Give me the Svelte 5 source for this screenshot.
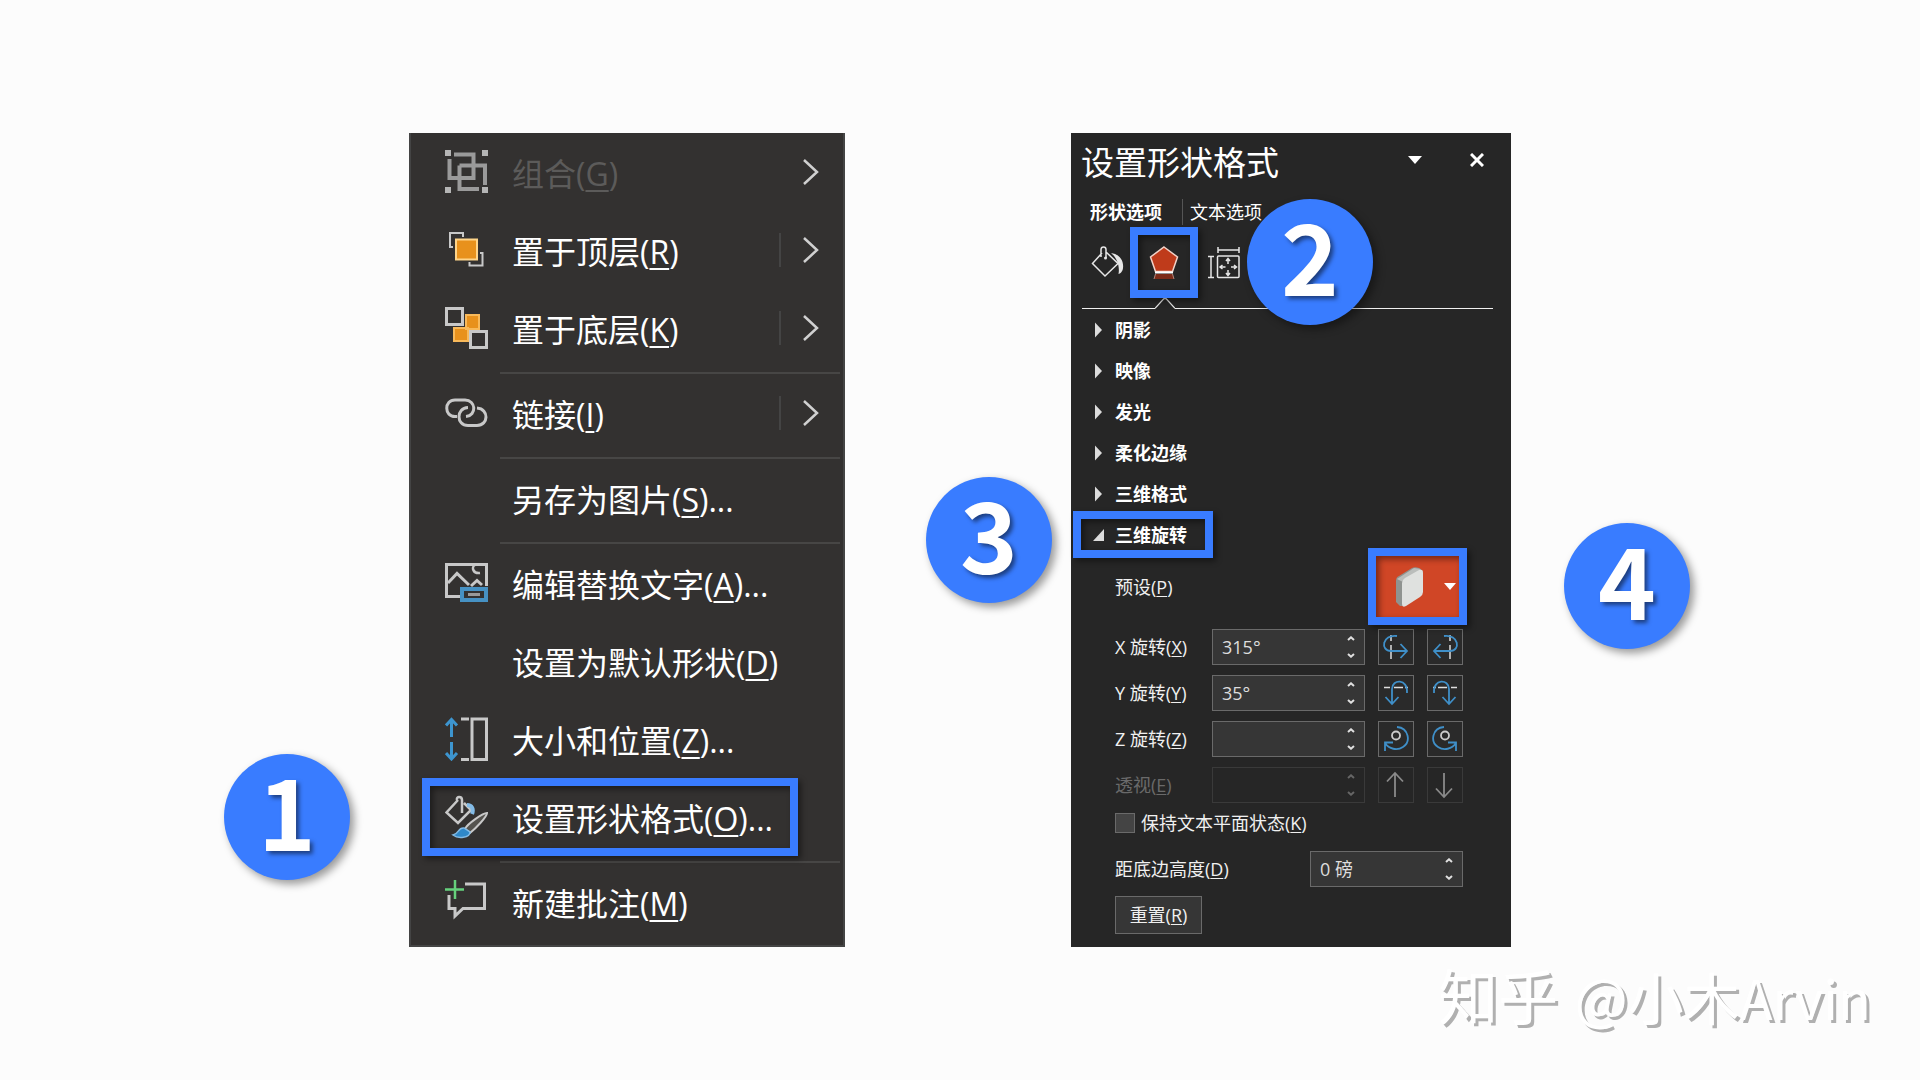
<script>
  const menu = [
    { icon: 'group', text: '组合', key: 'G', more: true, disabled: true },
    { icon: 'front', text: '置于顶层', key: 'R', more: true, split: true },
    { icon: 'back', text: '置于底层', key: 'K', more: true, split: true, line: true },
    { icon: 'link', text: '链接', key: 'I', more: true, split: true, line: true },
    { text: '另存为图片', key: 'S', dots: true, line: true },
    { icon: 'alt', text: '编辑替换文字', key: 'A', dots: true },
    { text: '设置为默认形状', key: 'D' },
    { icon: 'size', text: '大小和位置', key: 'Z', dots: true },
    { icon: 'format', text: '设置形状格式', key: 'O', dots: true, line: true, step: 1 },
    { icon: 'comment', text: '新建批注', key: 'M' }
  ];
  const sections = ['阴影', '映像', '发光', '柔化边缘', '三维格式'];
  const fields = [
    { id: 'x', name: 'X 旋转', key: 'X', value: '315°', a: '向左', b: '向右' },
    { id: 'y', name: 'Y 旋转', key: 'Y', value: '35°', a: '向下', b: '向上' },
    { id: 'z', name: 'Z 旋转', key: 'Z', value: '', a: '顺时针', b: '逆时针' },
    { id: 'p', name: '透视', key: 'E', value: '', a: '变窄', b: '变宽', disabled: true }
  ];
</script>

{#snippet spinner(id, value, disabled)}
  <div class="spinner" class:off={disabled}>
    <input {id} type="text" {value} {disabled} />
    <div class="steps">
      <button aria-label="增加" {disabled}><svg width="8" height="5" viewBox="0 0 8 5"><path d="M1 4L4 1.3L7 4" /></svg></button>
      <button aria-label="减少" {disabled}><svg width="8" height="5" viewBox="0 0 8 5"><path d="M1 1L4 3.7L7 1" /></svg></button>
    </div>
  </div>
{/snippet}

<div class="page">
  <main>
    <nav class="menu" aria-label="形状菜单">
      {#each menu as item}
        <div class="entry">
          <button class="item" disabled={item.disabled}>
            <span class="icon">
              {#if item.icon}
                <svg width="44" height="44" viewBox="0 0 44 44" fill="none" stroke="#c8c8c8" stroke-width="3">
                  {#if item.icon === 'group'}
                    <g stroke="#9a9a9a" stroke-width="4">
                      <path d="M9 4.5H28.5V28H4.5V9M14.5 15.5H40V35M34 39H14.5V15.5" />
                      <path d="M0 0h6v6H0zM37 0h6v6h-6zM0 37h6v6H0zM37 37h6v6h-6z" fill="#b5b5b5" stroke="none" />
                    </g>
                  {:else if item.icon === 'front'}
                    <path d="M8 19H5V5H18V9M35 25H37.5V37.5H24.5V34" stroke-width="2" />
                    <rect x="11" y="11.500" width="21" height="20" fill="#e8911c" stroke="#ffd58a" stroke-width="2" />
                  {:else if item.icon === 'back'}
                    <path d="M21 9h13v14H21zM9 22h14v13H9z" fill="#e8911c" stroke="#f8b95a" stroke-width="2" />
                    <path d="M1.500 2.500h16v16h-16zM25.500 25.500h16v16h-16z" fill="#333130" />
                  {:else if item.icon === 'link'}
                    <path d="M12 25.500H10C-1 25.500-1 9 10 9H20C31 9 32 24.500 21 25.500" />
                    <path d="M23 16.500C11 17 11 34.500 23 34.500H32C43.500 34.500 44.500 18 32 17" />
                  {:else if item.icon === 'alt'}
                    <path d="M15 35.500H1.500V3.500H41.500V25M3 22L12 12.500L24 24M26 25L32 19.500L37 24" />
                    <path d="M30 4C26 6 28 13 35 12" stroke-width="2.500" />
                    <path d="M17 28H41V39H17z" stroke="#4691c3" stroke-width="4" fill="#333130" />
                    <path d="M23 33.500H35" stroke="#999" />
                  {:else if item.icon === 'size'}
                    <path d="M6.500 20V3M1 8.500L6.500 2.500L12 8.500M6.500 25V41M1 36L6.500 42L12 36" stroke="#3d95cf" />
                    <path d="M27 2H41.500V42.500H27zM16 2H24M16 42.500H24" />
                  {:else if item.icon === 'format'}
                    <path d="M17 18V5C17 1 11 1 12 5M13 5L1.500 17.500L13 28L26 15L19 8" stroke-width="2.500" />
                    <path d="M22 10C27 10 29 14 27 19" stroke="#83bbe6" stroke-width="4" />
                    <path d="M42 18C38 18 22 29 20 34L25 38C30 34 42 22 42 18z" stroke-width="2" fill="#55534f" />
                    <path d="M19 33C13 32 14 39 8 40C13 44 25 43 25 37z" fill="#2f88c9" stroke="#83bbe6" stroke-width="1.500" />
                  {:else}
                    <path d="M20 4H39.500V28.500H18L10 36V28.500H4V15" />
                    <path d="M10 0V19M0 9.500H19" stroke="#66d17c" stroke-width="2.500" />
                  {/if}
                </svg>
              {/if}
            </span>
            <span class="text">{item.text}(<u>{item.key}</u>){item.dots ? '...' : ''}</span>
            {#if item.more}
              <span class="more" class:split={item.split}>
                <svg width="16" height="28" viewBox="0 0 16 28" fill="none" stroke="#d0d0d0" stroke-width="2.500"><path d="M1 2L14 14L1 26" /></svg>
              </span>
            {/if}
          </button>
          {#if item.step}
            <span class="ring"></span>
            <span class="badge one">1</span>
          {/if}
        </div>
        {#if item.line}<div class="rule"></div>{/if}
      {/each}
    </nav>

    <section class="panel">
      <header>
        <h1>设置形状格式</h1>
        <button aria-label="选项"><svg width="14" height="8" viewBox="0 0 14 8"><path d="M0 0H14L7 8z" fill="#fff" /></svg></button>
        <button aria-label="关闭"><svg width="14" height="14" viewBox="0 0 14 14" stroke="#fff" stroke-width="3"><path d="M1 1L13 13M13 1L1 13" /></svg></button>
      </header>
      <div class="tabs">
        <button class="active">形状选项</button>
        <button>文本选项</button>
      </div>
      <div class="kinds">
        <button aria-label="填充与线条">
          <svg width="34" height="34" viewBox="0 0 34 34" fill="none" stroke="#e6e6e6" stroke-width="1.500">
            <path d="M11 7L1.500 17.500L14 30L27 17.500L14.500 5.500M10 11V3.500C10 0 15 0 15 3.500V12" />
            <circle cx="14.500" cy="12" r="1.500" fill="#e6e6e6" stroke="none" />
            <path d="M20 7C28 8 33 14 32 22C32 25 29 28 27.500 28C29 20 26 12 20 7z" fill="#e6e6e6" stroke="none" />
          </svg>
        </button>
        <button class="effects" aria-label="效果">
          <svg width="30" height="36" viewBox="0 0 30 36">
            <path d="M15 2L28.500 12L23.500 26.500H6.500L1.500 12z" fill="#bf3b1b" stroke="#f3d3c9" stroke-width="1.500" />
            <path d="M6 27.500H24" stroke="#fff" stroke-width="2" />
            <path d="M6.500 29H23.500L25 34H5z" fill="#7d2b18" />
            <path d="M6.500 29L5 34M23.500 29L25 34" stroke="#b08a80" />
          </svg>
          <span class="ring"></span>
        </button>
        <button aria-label="大小与属性">
          <svg width="32" height="34" viewBox="0 0 32 34" fill="none" stroke="#e6e6e6" stroke-width="1.500">
            <path d="M10 1V7M31 1V7M10 4H31M0 10.500H6M0 31.500H6M3 10.500V31.500" />
            <rect x="9.500" y="10" width="21.500" height="21.500" rx="1" />
            <path d="M20 12.500V18M20 24V29.500M12 21H17.500M23 21H28.500M18 15L20 12.500L22 15M18 27L20 29.500L22 27M14.500 19L12 21L14.500 23M26 19L28.500 21L26 23" />
          </svg>
        </button>
        <span class="badge two">2</span>
      </div>
      <div class="edge"><i></i><svg width="20" height="11" viewBox="0 0 20 11" fill="none" stroke="#e6e6e6" stroke-width="1.300"><path d="M0 10.400L9 0.500H11L20 10.400" /></svg><i class="long"></i></div>

      <div class="sections">
        {#each sections as name}
          <button aria-expanded="false"><svg width="16" height="16" viewBox="0 0 16 16"><path d="M3 0.500L10 8L3 15.500z" fill="#dcdcdc" /></svg>{name}</button>
        {/each}
        <div class="open">
          <button aria-expanded="true"><svg width="16" height="16" viewBox="0 0 16 16"><path d="M12 2V14H1z" fill="#dcdcdc" /></svg>三维旋转</button>
          <span class="ring"></span>
          <span class="badge three">3</span>
        </div>
      </div>

      <div class="body">
        <div class="preset">
          <span>预设(<u>P</u>)</span>
          <button aria-label="预设">
            <svg width="30" height="42" viewBox="0 0 30 42">
              <path d="M1 15Q1 11 4 10L17 2Q20 0.500 24 2L28 5L8 40L5 40L1 36z" fill="#8f9390" />
              <path d="M2 13L19 2L26 3L8 16z" fill="#babdbb" />
              <path d="M7 17Q7 14 10 12L24 4Q28 2.500 28 7V26Q28 29 25 31L11 40Q7 42 7 38z" fill="#dfe1df" />
            </svg>
            <svg width="12" height="7" viewBox="0 0 12 7"><path d="M0 0H12L6 7z" fill="#fff" /></svg>
            <span class="ring"></span>
          </button>
          <span class="badge four">4</span>
        </div>

        {#each fields as f}
          <div class="field" class:off={f.disabled}>
            <label for={f.id}>{f.name}(<u>{f.key}</u>)</label>
            {@render spinner(f.id, f.value, f.disabled)}
            {#each [f.a, f.b] as side, i}
              <button class="turn" aria-label={side} disabled={f.disabled}>
                <svg width="28" height="28" viewBox="0 0 28 28" fill="none" stroke="#3f8fc8" stroke-width="1.800">
                  {#if f.id === 'x'}
                    <g transform={i ? 'translate(28 0) scale(-1 1)' : undefined}>
                      <path d="M9 2V8M9 12V26" stroke="#ddd" stroke-width="1.500" />
                      <path d="M15 3C0 1 -2 18 9 18H25M18.500 11L25 18L18.500 25" />
                    </g>
                  {:else if f.id === 'y'}
                    <g transform={i ? 'translate(28 0) scale(-1 1)' : undefined}>
                      <path d="M2 8.500H8M12 8.500H21M23 8.500H26" stroke="#ddd" stroke-width="1.500" />
                      <path d="M25 14C26 -1 10 0 10 10V25M3.500 18L10 25L16.500 18" />
                    </g>
                  {:else if f.id === 'z'}
                    <g transform={i ? 'translate(28 0) scale(-1 1)' : undefined}>
                      <path d="M15 2C27 3 29 17 21 22C15 26 7 24 3 18M3 26V17.500H11" />
                      <circle cx="14" cy="10.500" r="4" stroke="#ccc" />
                    </g>
                  {:else}
                    <g stroke="#8a8a8a" transform={i ? 'translate(0 28) scale(1 -1)' : undefined}>
                      <path d="M13 26V2M5 10.500L13 2L21 10.500" />
                    </g>
                  {/if}
                </svg>
              </button>
            {/each}
          </div>
        {/each}

        <div class="check">
          <input id="flat" type="checkbox" />
          <label for="flat">保持文本平面状态(<u>K</u>)</label>
        </div>
        <div class="field height">
          <label for="dist">距底边高度(<u>D</u>)</label>
          {@render spinner('dist', '0 磅', false)}
        </div>
        <button class="reset">重置(<u>R</u>)</button>
      </div>
    </section>
  </main>
  <footer><span class="site">知乎</span> @小木<span class="latin">Arvin</span></footer>
</div>

<style>
  :global(body) {
    margin: 0;
    background: #fcfcfc;
  }
  .page {
    min-height: 100vh;
    box-sizing: border-box;
    padding-top: 133px;
    font-family: 'Open Sans', 'Noto Sans CJK SC', sans-serif;
    color: #fff;
    overflow: hidden;
  }
  .page * {
    box-sizing: border-box;
  }
  main {
    display: grid;
    grid-template-columns: minmax(0, 409fr) minmax(0, 436fr) minmax(0, 226fr) minmax(0, 440fr) minmax(0, 409fr);
    align-items: start;
  }
  button {
    font: inherit;
    color: inherit;
    background: none;
    border: 0;
    padding: 0;
    margin: 0;
  }
  svg {
    display: block;
    flex: none;
  }
  u {
    text-decoration-thickness: 1px;
    text-underline-offset: 2px;
  }
  .ring {
    position: absolute;
    border: 8px solid #397cff;
    box-shadow: 3px 3px 6px rgba(0, 0, 0, 0.45), inset 3px 3px 6px rgba(0, 0, 0, 0.45);
    pointer-events: none;
  }
  .badge {
    position: absolute;
    z-index: 2;
    width: 126px;
    height: 126px;
    border-radius: 50%;
    background: #397cff;
    box-shadow: 4px 4px 8px rgba(0, 0, 0, 0.4);
    font: 700 98px/108px 'Noto Sans CJK SC', sans-serif;
    text-align: center;
    text-shadow: 3px 3px 4px rgba(0, 0, 0, 0.5);
    color: #fff;
  }

  .menu {
    grid-column: 2;
    background: #333130;
    border: solid #444;
    border-width: 0 2px 2px;
    padding-bottom: 4px;
  }
  .entry {
    position: relative;
  }
  .item {
    display: flex;
    align-items: center;
    width: 100%;
    height: 78px;
    padding: 0 24px 0 34px;
    text-align: left;
  }
  .item:disabled .text {
    color: #5c5b5a;
  }
  .icon {
    width: 67px;
  }
  .text {
    flex: 1;
    padding-top: 4px;
    font-size: 32px;
    line-height: 40px;
    white-space: nowrap;
  }
  .text u {
    text-decoration-thickness: 2px;
    text-underline-offset: 4px;
  }
  .more {
    display: flex;
    align-items: center;
    justify-content: flex-end;
    width: 40px;
    height: 34px;
  }
  .split {
    border-left: 2px solid #444;
  }
  .rule {
    height: 7px;
    margin: 0 3px 0 89px;
    border-bottom: 2px solid #474645;
  }
  .entry .ring {
    inset: 0 45px 0 11px;
  }
  .one {
    left: -187px;
    top: -24px;
  }

  .panel {
    grid-column: 4;
    background: #262626;
    padding-bottom: 13px;
    font-size: 18px;
    line-height: 24px;
  }
  header {
    display: flex;
    align-items: center;
    height: 60px;
    padding: 0 27px 0 10px;
  }
  h1 {
    flex: 1;
    margin: 0;
    font-weight: 400;
    font-size: 33px;
    line-height: 44px;
  }
  header button {
    padding-bottom: 6px;
  }
  header button + button {
    margin-left: 48px;
  }
  .tabs {
    display: flex;
    margin: 6px 0 2px 19px;
  }
  .tabs button {
    height: 26px;
  }
  .tabs .active {
    font-weight: 700;
    width: 93px;
    text-align: left;
    border-right: 1px solid #555;
    margin-right: 7px;
  }
  .kinds {
    position: relative;
    display: flex;
    align-items: center;
    height: 71px;
    padding-left: 20px;
  }
  .effects {
    position: relative;
    display: grid;
    place-items: center;
    width: 52px;
    height: 55px;
    margin: 0 18px 0 13px;
  }
  .effects .ring {
    inset: -8px;
  }
  .two {
    left: 176px;
    top: -28px;
  }
  .edge {
    display: flex;
    align-items: flex-end;
    margin: 0 18px 0 11px;
  }
  .edge i {
    width: 73px;
    border-bottom: 1px solid #f0f0f0;
  }
  .edge .long {
    flex: 1;
  }
  .sections {
    margin-bottom: 1px;
  }
  .sections button {
    display: flex;
    align-items: center;
    gap: 7px;
    width: 100%;
    height: 41px;
    padding-left: 21px;
    font-weight: 700;
  }
  .open {
    position: relative;
  }
  .open .ring {
    left: 2px;
    top: -3px;
    width: 140px;
    height: 47px;
  }
  .three {
    left: -145px;
    top: -37px;
  }
  .body {
    padding: 0 48px 0 44px;
    color: #f0f0f0;
  }
  .preset {
    position: relative;
    display: flex;
    align-items: center;
    justify-content: space-between;
    margin-bottom: 12px;
  }
  .preset button {
    position: relative;
    display: flex;
    align-items: center;
    justify-content: flex-end;
    gap: 19px;
    width: 83px;
    height: 61px;
    margin-right: 4px;
    padding-right: 3px;
    background: #d04626;
  }
  .preset .ring {
    inset: -8px;
  }
  .four {
    right: -227px;
    top: -33px;
  }
  .field {
    display: flex;
    gap: 13px;
    margin-bottom: 10px;
    align-items: center;
  }
  .field label {
    width: 84px;
    white-space: nowrap;
  }
  .spinner {
    flex: 1;
    min-width: 0;
    display: flex;
    height: 36px;
    border: 1px solid #6a6a6a;
    background: #363636;
  }
  .spinner input {
    flex: 1;
    min-width: 0;
    padding: 0 0 0 9px;
    border: 0;
    background: none;
    color: #ddd;
    font: inherit;
  }
  .steps {
    display: flex;
    flex-direction: column;
    justify-content: center;
    gap: 3px;
    width: 17px;
    margin-right: 5px;
  }
  .steps button {
    display: grid;
    place-items: center;
    height: 14px;
  }
  .steps path {
    fill: none;
    stroke: #e0e0e0;
    stroke-width: 2;
  }
  .turn {
    display: grid;
    place-items: center;
    width: 36px;
    height: 36px;
    border: 1px solid #6a6a6a;
    background: #2a2a2a;
  }
  .off label {
    color: #6a6a6a;
  }
  .off.spinner,
  .off .turn {
    border-color: #3a3a3a;
    background: #262626;
  }
  .off .steps path {
    stroke: #666;
  }
  .check {
    display: flex;
    align-items: center;
    gap: 6px;
    height: 20px;
    margin-bottom: 18px;
  }
  .check input {
    appearance: none;
    width: 20px;
    height: 20px;
    margin: 0;
    border: 1px solid #6a6a6a;
    background: #444;
  }
  .height label {
    flex: 1;
  }
  .height .spinner {
    flex: none;
    width: 153px;
  }
  .reset {
    display: block;
    width: 87px;
    height: 38px;
    margin-top: -1px;
    border: 1px solid #6a6a6a;
    background: #363636;
  }
  footer {
    padding: 7px 49px 0 0;
    text-align: right;
    font: 400 56px/80px 'Noto Sans CJK SC', sans-serif;
    text-shadow: 3px 3px 0 #b0b0b0;
  }
  .site {
    font-size: 60px;
    margin-right: 4px;
  }
  .latin {
    font-size: 54px;
  }
</style>
